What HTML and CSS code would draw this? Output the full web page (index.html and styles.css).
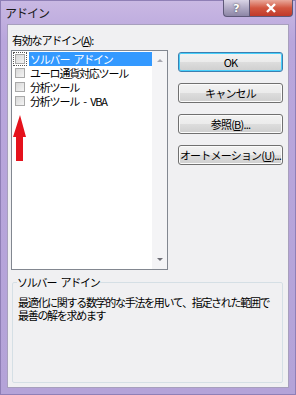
FILE: index.html
```html
<!DOCTYPE html>
<html lang="ja">
<head>
    <meta charset="UTF-8">
    <title>アドイン</title>
    <link rel="stylesheet" href="styles.css">
</head>
<body>
    <!-- ウィンドウ -->
    <div class="window">
        <div class="titlebar">
            <span class="title">アドイン</span>
            <div class="caption-buttons">
                <span class="cap-btn help">?</span>
                <span class="cap-btn close">
                    <svg width="12" height="10" viewBox="0 0 12 10">
                        <path d="M2 1 L10 9 M10 1 L2 9" stroke="#fff" stroke-width="2.4" fill="none"/>
                    </svg>
                </span>
            </div>
        </div>

        <div class="client">
            <div class="main">
                <div class="left">
                    <div class="label">有効なアドイン(<u>A</u>):</div>
                    <div class="listbox">
                        <ul class="items">
                            <li class="item selected"><span class="check focus"></span><span class="text">ソルバー アドイン</span></li>
                            <li class="item"><span class="check"></span><span class="text">ユーロ通貨対応ツール</span></li>
                            <li class="item"><span class="check"></span><span class="text">分析ツール</span></li>
                            <li class="item"><span class="check"></span><span class="text">分析ツール - VBA</span></li>
                        </ul>
                        <div class="scrollbar">
                            <span class="arrow up"></span>
                            <span class="arrow down"></span>
                        </div>
                        <!-- 赤い矢印 -->
                        <svg class="red-arrow" width="14" height="46" viewBox="0 0 14 46">
                            <path d="M7 0 L13 22 L10 22 L10 46 L3 46 L3 22 L0 22 Z" fill="#e5121c"/>
                        </svg>
                    </div>
                </div>

                <div class="buttons">
                    <button class="btn default">OK</button>
                    <button class="btn">キャンセル</button>
                    <button class="btn">参照(<u>B</u>)...</button>
                    <button class="btn">オートメーション(<u>U</u>)...</button>
                </div>
            </div>

            <fieldset class="group">
                <legend>ソルバー アドイン</legend>
                <p class="desc">最適化に関する数学的な手法を用いて、指定された範囲で<br>最善の解を求めます</p>
            </fieldset>
        </div>
    </div>
</body>
</html>
```

FILE: styles.css
```css
/* 全体 */
* {
    margin: 0;
    padding: 0;
    box-sizing: border-box;
}

body {
    font-family: 'Noto Sans CJK JP', 'Noto Sans', sans-serif;
    font-size: 11px;
    color: #000;
}

.window {
    width: 296px;
    height: 395px;
    display: flex;
    flex-direction: column;
    background: linear-gradient(#c9b8e3, #b9a6dc 40px, #b4a3d8);
    border: 1px solid #8f7fb6;
}

/* タイトルバー */
.titlebar {
    height: 23px;
    display: flex;
    justify-content: space-between;
    align-items: flex-start;
}

.title {
    margin: 4px 0 0 4px;
    font-size: 12px;
    line-height: 15px;
    letter-spacing: -1px;
    color: #1a1a1a;
}

.caption-buttons {
    display: flex;
    margin-right: 2px;
    margin-top: -1px;
}

.cap-btn {
    height: 17px;
    display: flex;
    align-items: center;
    justify-content: center;
    border: 1px solid #5e5878;
    border-top: none;
}

.help {
    width: 26px;
    border-radius: 0 0 0 4px;
    border-right: none;
    background: linear-gradient(#d9d4e6, #b0a9c4 50%, #8d86a6);
    color: #fff;
    font-family: 'DejaVu Sans', sans-serif;
    font-weight: bold;
    font-size: 11px;
    text-shadow: 0 0 2px #333;
}

.close {
    width: 44px;
    border-radius: 0 0 4px 0;
    background: linear-gradient(#e9a99b, #d2563f 50%, #c0392b);
}

/* クライアント領域 */
.client {
    flex: 1;
    margin: 0 6px 6px 6px;
    background: #f0f0f2;
    border: 1px solid #a79fbd;
    padding: 8px 5px 4px 3px;
    display: flex;
    flex-direction: column;
}

.main {
    display: flex;
    gap: 10px;
}

.label {
    padding-left: 1px;
    line-height: 14px;
    letter-spacing: -1.2px;
}

.label u, .btn u {
    text-decoration: underline;
    text-underline-offset: 1px;
}

/* リストボックス */
.listbox {
    position: relative;
    margin-top: 3px;
    width: 157px;
    height: 220px;
    border: 1px solid #828790;
    background: #fff;
    display: flex;
}

.items {
    list-style: none;
    flex: 1;
    padding-top: 1px;
}

.item {
    height: 14px;
    display: flex;
    align-items: center;
    line-height: 14px;
    letter-spacing: -1.2px;
    word-spacing: 3px;
}

.check {
    width: 10px;
    height: 10px;
    margin: 0 4px 0 3px;
    border: 1px solid #a9a9a9;
    background: linear-gradient(135deg, #d8d8d8, #f4f4f4);
}

.check.focus {
    outline: 1px dotted #555;
    outline-offset: 1px;
}

.text {
    padding: 0 2px 0 1px;
    flex: 1;
}

.item.selected .text {
    background: #3399ff;
    color: #fff;
}

.scrollbar {
    width: 15px;
    background: #f4f4f6;
    display: flex;
    flex-direction: column;
    justify-content: space-between;
    align-items: center;
    padding: 8px 0 8px;
}

.arrow {
    width: 0;
    height: 0;
    border-left: 3px solid transparent;
    border-right: 3px solid transparent;
}

.arrow.up {
    border-bottom: 3px solid #a8a8b0;
}

.arrow.down {
    border-top: 3px solid #707078;
}

.red-arrow {
    position: absolute;
    left: 1px;
    top: 64px;
}

/* ボタン */
.buttons {
    display: flex;
    flex-direction: column;
    gap: 11px;
    padding-top: 19px;
}

.btn {
    width: 105px;
    height: 20px;
    font-family: inherit;
    font-size: 11px;
    letter-spacing: -0.8px;
    color: #000;
    border: 1px solid #707070;
    border-radius: 3px;
    background: linear-gradient(#f2f2f2 0, #ebebeb 50%, #dddddd 50%, #cfcfcf);
    box-shadow: inset 0 0 0 1px #fbfbfb;
}

.btn.default {
    border-color: #3c7fb1;
    box-shadow: inset 0 0 0 1px #48d0fb;
}

/* グループボックス */
.group {
    flex: 1;
    margin: 5px 0 0 1px;
    border: 1px solid #d5dfe5;
    border-radius: 2px;
    padding: 0 4px;
}

.group legend {
    padding: 0;
    line-height: 14px;
    letter-spacing: -1.2px;
    word-spacing: 3px;
}

.desc {
    margin: 7px 0 0 1px;
    line-height: 13px;
    letter-spacing: -1.3px;
}
```
